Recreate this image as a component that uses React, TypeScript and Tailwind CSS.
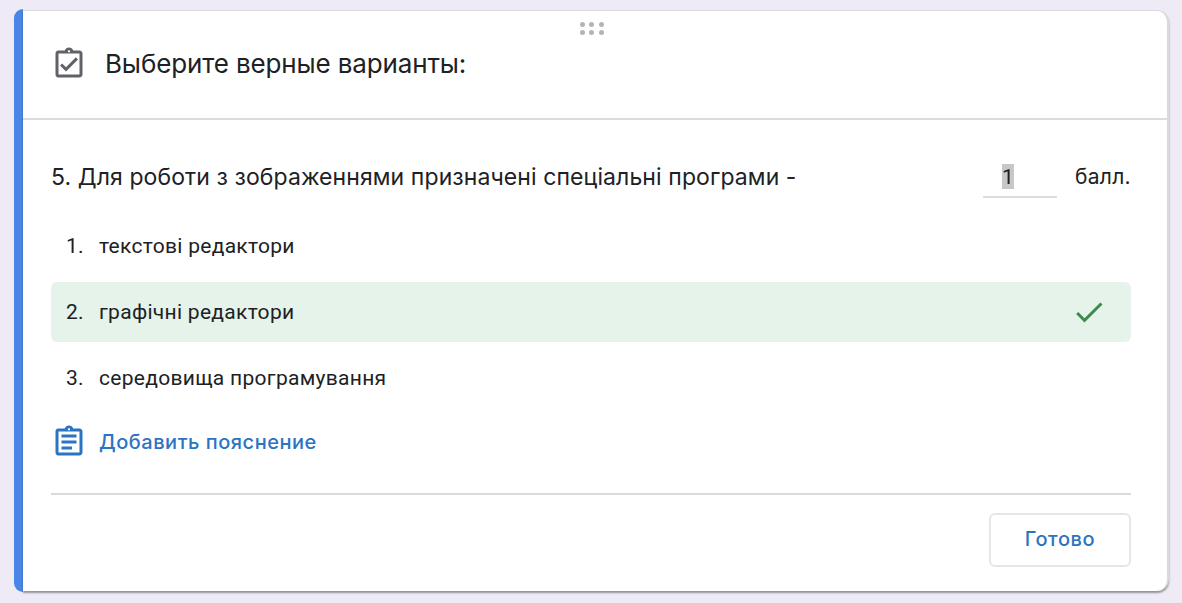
import React from 'react';
import { MdCheck, MdOutlineAssignment, MdOutlineAssignmentTurnedIn } from 'react-icons/md';

const options = [
  { id: 1, text: 'текстові редактори', correct: false },
  { id: 2, text: 'графічні редактори', correct: true },
  { id: 3, text: 'середовища програмування', correct: false },
];

export default function App() {
  return (
    <div className="flex h-[603px] w-[1182px] bg-[#eeebf6] pt-[9px] pl-[14px] font-['Inter','Noto_Sans',sans-serif] text-[#202124]">
      <div className="flex h-[583px] w-[1155px]">
        {/* Active card marker */}
        <div className="w-[9px] shrink-0 rounded-l-[9px] bg-[#4a86e5]" />

        <div className="mt-px flex h-[581px] grow flex-col rounded-r-[12px] border-t border-r-2 border-[#d9d9de] bg-white shadow-[0_2px_2px_rgba(0,0,0,0.38)]">
          {/* Header */}
          <header className="flex h-[109px] shrink-0 flex-col border-b-2 border-[#dadce0]">
            <div className="mt-[11px] ml-[557px] grid w-[24px] grid-cols-3 gap-x-[4px] gap-y-[3px]">
              {[0, 1, 2, 3, 4, 5].map((dot) => (
                <span key={dot} className="size-[5px] rounded-full bg-[#b4b4b4]" />
              ))}
            </div>
            <div className="mt-[11px] flex h-[36px] items-center pl-[28px]">
              <MdOutlineAssignmentTurnedIn className="size-[36px] text-[#5f6368]" />
              <h1 className="ml-[18px] text-[26px] leading-[36px] tracking-[-0.14px] whitespace-nowrap">Выберите верные варианты:</h1>
            </div>
          </header>

          <div className="flex grow flex-col pr-[36px] pl-[28px]">
            {/* Question and score */}
            <div className="mt-[41px] flex h-[37px] items-start justify-between">
              <h2 className="text-[23px] leading-[32px] tracking-[0.09px] whitespace-nowrap">
                5. Для роботи з зображеннями призначені спеціальні програми -
              </h2>
              <div className="flex items-start">
                <div className="flex h-[37px] w-[74px] border-b-2 border-[#dadce0] pt-[3px] pl-[19px]">
                  <span className="h-[25px] w-[12px] bg-[#c8c8c8] text-center font-['Roboto',sans-serif] text-[21px] leading-[26px]">1</span>
                </div>
                <span className="ml-[18px] w-[56px] text-[21px] leading-[32px] tracking-[0.3px] whitespace-nowrap">балл.</span>
              </div>
            </div>

            {/* Answers */}
            <ol className="mt-[18px] flex flex-col gap-[6px] font-['Roboto',sans-serif] text-[21px] tracking-[0.29px]">
              {options.map((option) => (
                <li
                  key={option.id}
                  className={`flex h-[60px] items-center rounded-[6px] pr-[24px] pl-[15px] ${option.correct ? 'bg-[#e6f3ea]' : ''}`}
                >
                  <span className="w-[33px] pt-[2px]">{option.id}.</span>
                  <span className="grow pt-[2px] whitespace-nowrap">{option.text}</span>
                  {option.correct && <MdCheck className="size-[36px] text-[#3c8a50]" />}
                </li>
              ))}
            </ol>

            <button className="mt-[16px] flex h-[36px] items-center text-[20px] font-medium tracking-[0.52px] whitespace-nowrap text-[#2b74c4]">
              <MdOutlineAssignment className="size-[36px]" />
              <span className="ml-[12px]">Добавить пояснение</span>
            </button>

            <div className="mt-[33px] border-t-2 border-[#dadada] pt-[18px]">
              <button className="ml-auto flex h-[54px] w-[142px] items-center justify-center rounded-[6px] border-2 border-[#e6e6e8] pb-[2px] text-[20px] font-medium tracking-[0.6px] text-[#2b74c4]">
                Готово
              </button>
            </div>
          </div>
        </div>
      </div>
    </div>
  );
}
